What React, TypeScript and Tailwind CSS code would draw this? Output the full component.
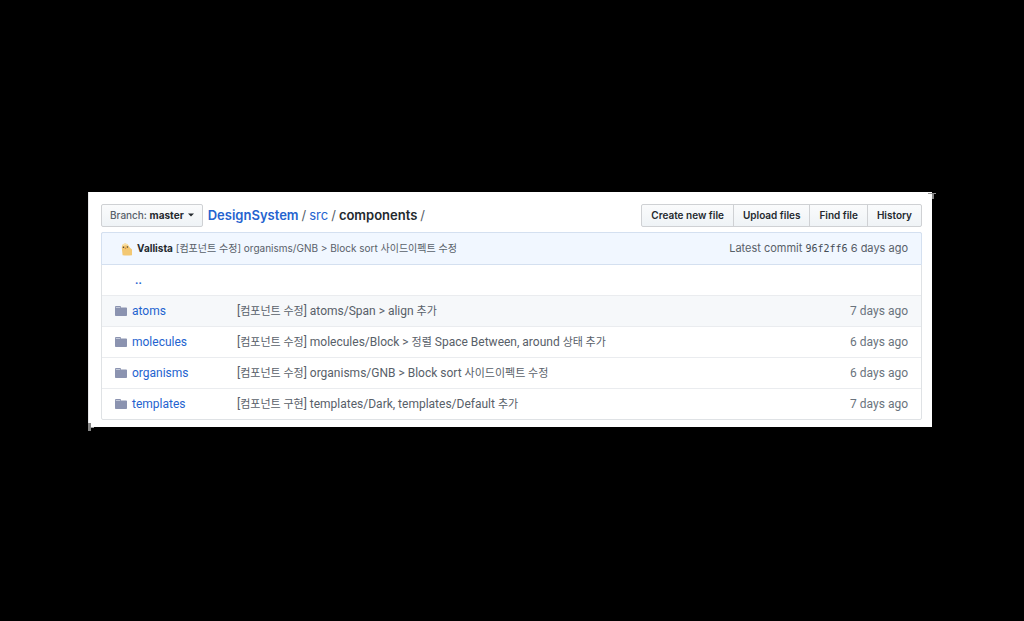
import React from "react";

type Entry = { name: string; message: string; age: string };

const entries: Entry[] = [
  { name: "atoms", message: "[컴포넌트 수정] atoms/Span > align 추가", age: "7 days ago" },
  { name: "molecules", message: "[컴포넌트 수정] molecules/Block > 정렬 Space Between, around 상태 추가", age: "6 days ago" },
  { name: "organisms", message: "[컴포넌트 수정] organisms/GNB > Block sort 사이드이펙트 수정", age: "6 days ago" },
  { name: "templates", message: "[컴포넌트 구현] templates/Dark, templates/Default 추가", age: "7 days ago" },
];

const actions = ["Create new file", "Upload files", "Find file", "History"];

// Hangul glyphs fill more of the em box, so they are set one step smaller.
function Message({ text }: { text: string }) {
  return (
    <>
      {text.split(/([가-힣]+(?: [가-힣]+)*)/).map((part, i) =>
        i % 2 ? <span key={i} className="text-[11px]">{part}</span> : part,
      )}
    </>
  );
}

function FolderIcon() {
  return (
    <svg viewBox="0 0 12 10" className="block h-[10px] w-3" aria-hidden="true">
      <path d="M0 1Q0 0 1 0H5Q6 0 6 1V1.4H11.2Q12 1.4 12 2.2V9.2Q12 10 11.2 10H.8Q0 10 0 9.2Z" fill="#8b93b0" />
      <path d="M.8 1H5.2V1.9H.8Z" fill="#c9cfdd" />
    </svg>
  );
}

function Avatar() {
  return (
    <svg viewBox="0 0 12 14" className="h-[14px] w-3 shrink-0" aria-hidden="true">
      <path d="M1.6 13.2L.8 6Q.6 2 4 1.6Q6.8 1.4 8 4.6Q8.6 5.8 11 7.6V13.2Q6 14 1.6 13.2Z" fill="#f3c873" />
      <path d="M1 4.4Q1.6 1.8 4 1.6Q6.6 1.5 7.6 4L4.8 3Z" fill="#f9e2ad" />
      <circle cx="2.5" cy="5.2" r=".8" fill="#4b4035" />
      <circle cx="6.4" cy="5" r=".8" fill="#4b4035" />
      <path d="M3.5 6L4.5 5.5L5.5 6.1L4.5 7.2Z" fill="#dc8f36" />
    </svg>
  );
}

function CornerMark() {
  return (
    <svg viewBox="0 0 8 7" className="h-[7px] w-2" aria-hidden="true">
      <path d="M0 1.5H8" stroke="#969696" fill="none" />
      <path d="M5 1V7" stroke="#858585" strokeWidth="2" fill="none" />
    </svg>
  );
}

function EdgeMark() {
  return (
    <svg viewBox="0 0 6 8" className="h-2 w-[6px]" aria-hidden="true">
      <path d="M1.5 0V8" stroke="#868686" strokeWidth="3" fill="none" />
      <path d="M3 4.5H6" stroke="#a0a0a0" fill="none" />
    </svg>
  );
}

export default function App() {
  return (
    <div className="min-h-screen bg-black pt-48 pr-[92px] pb-12 pl-[88px] font-['Inter','Noto_Sans_CJK_KR',sans-serif] text-[#586069]">
      <main className="relative border-l border-[#e6e7e9] bg-white pt-3 pr-[10px] pb-[7px] pl-3">
        <header className="flex h-[23px] items-center justify-between">
          <div className="flex items-center gap-[5px]">
            <button
              type="button"
              aria-haspopup="menu"
              className="flex h-[23px] items-center rounded-[2px] border border-[#cfd1d4] bg-linear-to-b from-[#fafbfc] to-[#eff3f6] px-2 pb-px text-[10px] leading-4 font-medium whitespace-nowrap"
            >
              Branch:&nbsp;<span className="font-bold text-[#24292e]">master</span>
              <svg viewBox="0 0 6 4" className="ml-1 h-1 w-[6px]" aria-hidden="true">
                <path d="M0 .4H6L3 3.6Z" fill="#24292e" />
              </svg>
            </button>
            <nav aria-label="Breadcrumb" className="flex gap-[3px] pb-[2px] text-[13px] leading-5 whitespace-nowrap">
              <a href="#design-system" className="font-semibold text-[#2463cf]">DesignSystem</a>
              <span>/</span>
              <a href="#src" className="text-[#2463cf]">src</a>
              <span>/</span>
              <strong className="font-semibold text-[#24292e]">components</strong>
              <span>/</span>
            </nav>
          </div>
          <div className="flex">
            {actions.map((action) => (
              <button
                key={action}
                type="button"
                className="-ml-px h-[23px] border border-[#cfd1d4] bg-linear-to-b from-[#fafbfc] to-[#eff3f6] px-[9px] pb-px text-[10px] leading-4 font-semibold whitespace-nowrap text-[#24292e] first:rounded-l-[2px] last:rounded-r-[2px]"
              >
                {action}
              </button>
            ))}
          </div>
        </header>

        <section className="mt-[5px] rounded-[2px] border border-[#dfe2e5]">
          <div className="-mx-px -mt-px flex h-[33px] items-center justify-between rounded-t-[2px] border border-[#d4e0f0] bg-[#f1f7ff] pr-[13px] pl-[19px] whitespace-nowrap">
            <div className="flex items-center gap-1 text-[10px] leading-4">
              <Avatar />
              <p className="pb-[2px]">
                <a href="#vallista" className="font-bold text-[#24292e]">Vallista</a>{" "}
                <a href="#commit">[컴포넌트 수정] organisms/GNB &gt; Block sort 사이드이펙트 수정</a>
              </p>
            </div>
            <p className="text-[11px] leading-4">
              Latest commit{" "}
              <a href="#commit" className="font-['DejaVu_Sans_Mono',monospace] text-[10px] text-[#444d56]">96f2ff6</a>{" "}
              6 days ago
            </p>
          </div>
          <table className="w-full table-fixed border-separate border-spacing-0 font-['Roboto','Noto_Sans_CJK_KR',sans-serif] text-[12px] leading-[18px]" aria-label="Files">
            <colgroup>
              <col className="w-[30px]" />
              <col className="w-[105px]" />
              <col />
              <col className="w-[100px]" />
            </colgroup>
            <tbody>
              <tr>
                <td className="h-[30px] p-0" />
                <td className="p-0 pl-[3px]" colSpan={3}>
                  <a href="#parent" className="font-semibold text-[#2463cf]">..</a>
                </td>
              </tr>
              {entries.map((entry) => (
                <tr key={entry.name} className="whitespace-nowrap nth-2:bg-[#f6f8fa]">
                  <td className="h-[31px] border-t border-[#eaecef] p-0 pl-[13px]"><FolderIcon /></td>
                  <td className="border-t border-[#eaecef] p-0"><a href={"#" + entry.name} className="text-[#2463cf]">{entry.name}</a></td>
                  <td className="border-t border-[#eaecef] p-0"><a href="#commit"><Message text={entry.message} /></a></td>
                  <td className="border-t border-[#eaecef] p-0 pr-[13px] text-right text-[#6a737d]">{entry.age}</td>
                </tr>
              ))}
            </tbody>
          </table>
        </section>
        <div className="absolute top-0 -right-1"><CornerMark /></div>
        <div className="absolute -bottom-1 -left-px"><EdgeMark /></div>
      </main>
    </div>
  );
}
